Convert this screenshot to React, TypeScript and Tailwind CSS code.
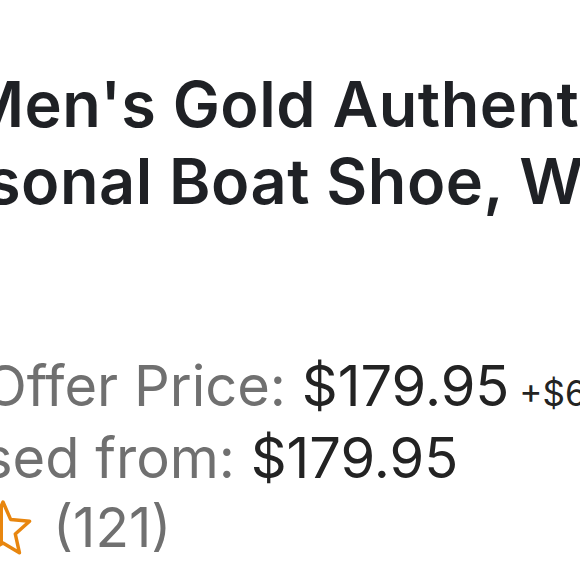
export default function App() {
    return (
        <div className="w-[580px] h-[580px] overflow-hidden bg-white font-['Inter','Liberation_Sans',sans-serif]">
            {/* Title */}
            <div className="pt-[66px] text-[63px] leading-[77px] tracking-[0.5px] font-semibold text-[#1f2125] whitespace-nowrap">
                <div className="ml-[-34px]">Men's Gold Authentic Original</div>
                <div className="ml-[-14px]">sonal Boat Shoe, White</div>
            </div>

            {/* Prices */}
            <div className="mt-[134px] text-[56px] leading-[65px] whitespace-nowrap">
                <div className="ml-[-16px]">
                    <span className="text-[#707070]">Offer Price: </span>
                    <span className="text-[#232323]">$179.95</span>
                    <span className="text-[#232323] text-[35px]"> +$6.99 shipping</span>
                </div>
                <div className="ml-[-17px]">
                    <span className="text-[#707070]">sed from: </span>
                    <span className="text-[#232323]">$179.95</span>
                </div>
                <div className="flex items-center mt-[4px] h-[65px]">
                    <svg viewBox="0 0 60 60" className="w-[60px] h-[60px] ml-[-27px] shrink-0">
                        <defs>
                            <clipPath id="half">
                                <rect x="0" y="0" width="30" height="60" />
                            </clipPath>
                        </defs>
                        <path
                            d="M30 4 L37.6 21.4 L56.6 23.3 L42.3 36 L46.4 54.7 L30 45 L13.6 54.7 L17.7 36 L3.4 23.3 L22.4 21.4 Z"
                            fill="#e8860f"
                            clipPath="url(#half)"
                        />
                        <path
                            d="M30 4 L37.6 21.4 L56.6 23.3 L42.3 36 L46.4 54.7 L30 45 L13.6 54.7 L17.7 36 L3.4 23.3 L22.4 21.4 Z"
                            fill="none"
                            stroke="#e8860f"
                            strokeWidth="3.5"
                            strokeLinejoin="round"
                        />
                    </svg>
                    <span className="ml-[20px] text-[55px] text-[#707070]">(121)</span>
                </div>
            </div>
        </div>
    );
}
